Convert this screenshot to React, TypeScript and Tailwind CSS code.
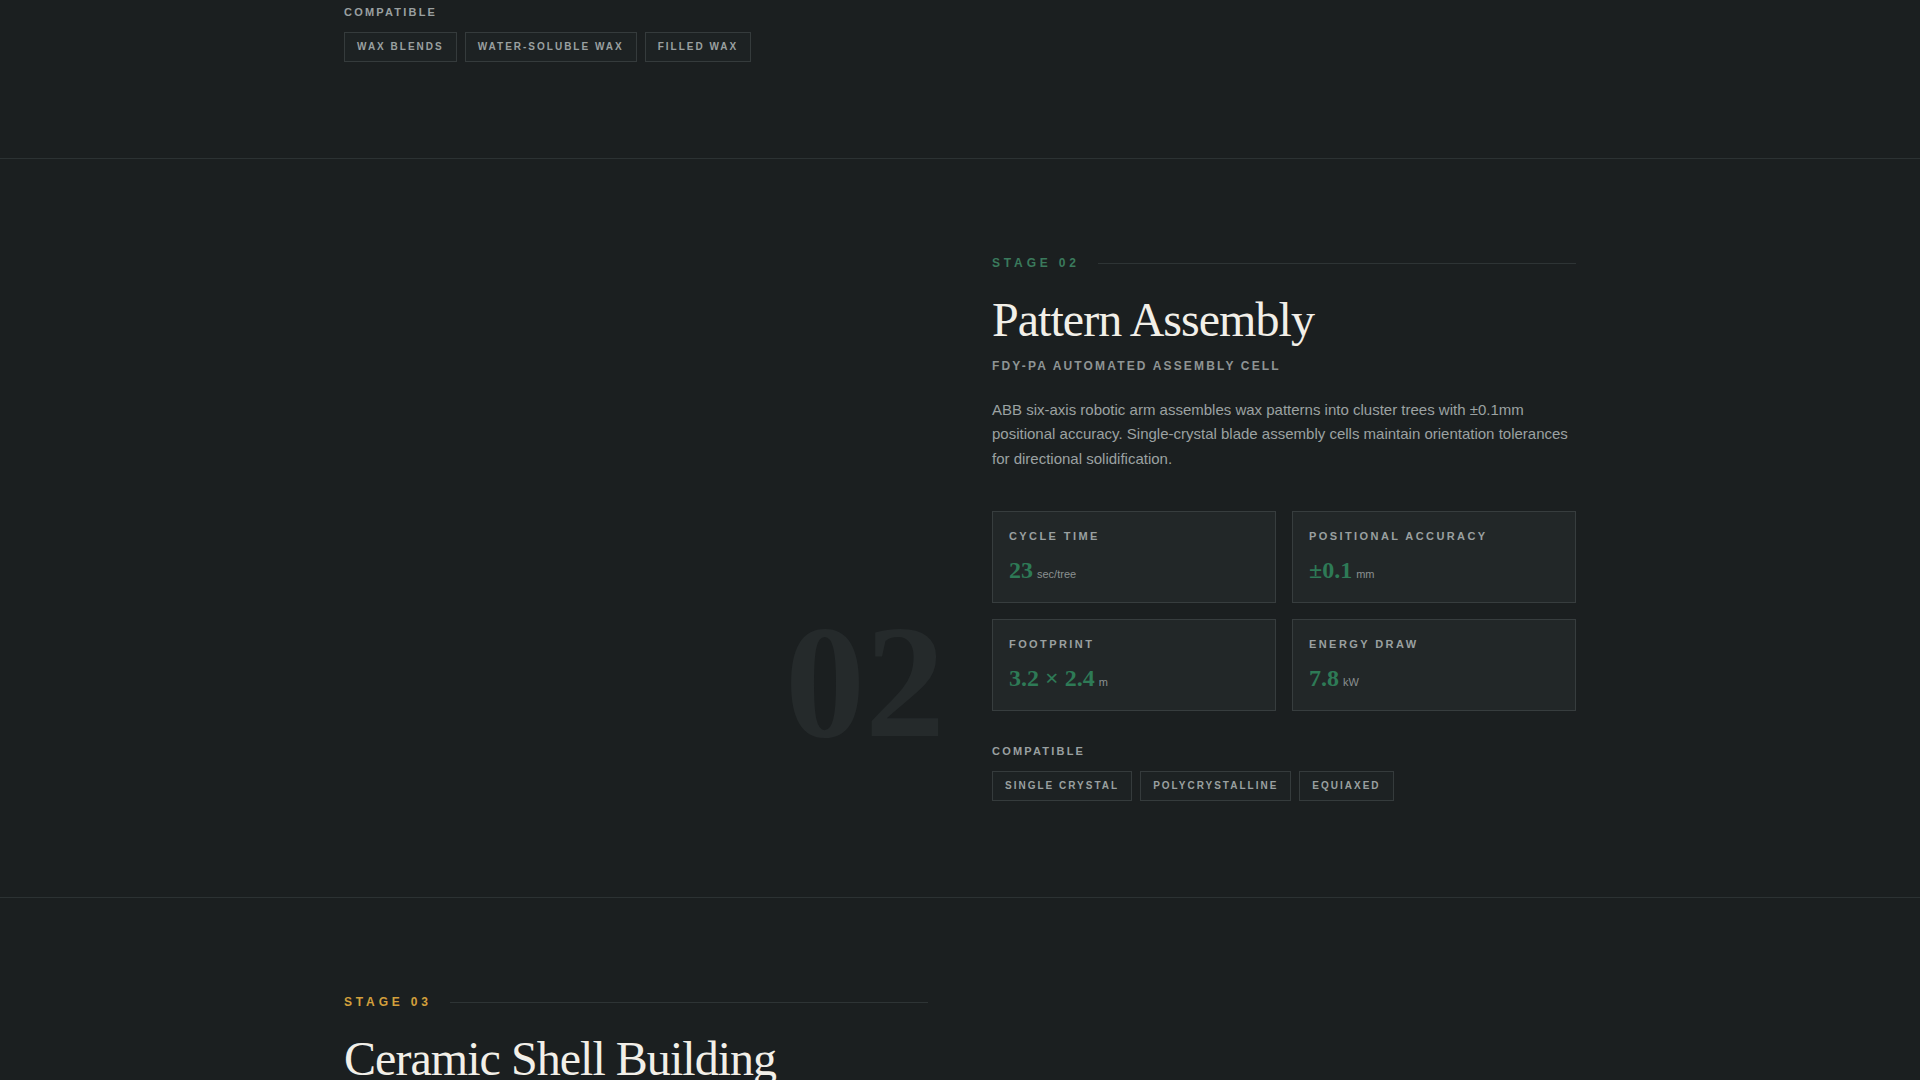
import React from 'react';

const sans = { fontFamily: '"Liberation Sans", Arial, sans-serif' };
const serif = { fontFamily: '"Liberation Serif", "Times New Roman", serif' };

interface Spec {
  label: string;
  value: string;
  unit: string;
}

const Tag: React.FC<{ children: React.ReactNode }> = ({ children }) => (
  <span className="border border-[#353b3c] bg-[#1d2223] px-3 py-[6px] text-[10px] font-bold uppercase leading-4 tracking-[0.2em] text-[#9aa0a0]">
    {children}
  </span>
);

const Compatible: React.FC<{ items: string[] }> = ({ items }) => (
  <div>
    <div className="mb-3 text-[11px] font-bold uppercase leading-4 tracking-[0.2em] text-[#9aa0a0]">Compatible</div>
    <div className="flex flex-wrap gap-2">
      {items.map((i) => (
        <Tag key={i}>{i}</Tag>
      ))}
    </div>
  </div>
);

const StageLabel: React.FC<{ n: string; color: string }> = ({ n, color }) => (
  <div className="flex items-center gap-[18px]">
    <span className={`text-[12px] font-bold uppercase leading-4 tracking-[0.32em] ${color}`}>Stage {n}</span>
    <div className="h-px flex-1 bg-[#2e3435]" />
  </div>
);

const SpecCard: React.FC<{ spec: Spec }> = ({ spec }) => (
  <div className="border border-[#373d3e] bg-[#222728] p-4">
    <div className="text-[11px] font-bold uppercase leading-4 tracking-[0.22em] text-[#9aa0a0]">{spec.label}</div>
    <div className="mt-[10px] flex items-baseline">
      <span className="text-[24px] font-bold leading-8 text-[#2e7a56]" style={serif}>
        {spec.value}
      </span>
      <span className="ml-1 text-[11px] text-[#8a9090]">{spec.unit}</span>
    </div>
  </div>
);

const specs: Spec[] = [
  { label: 'Cycle Time', value: '23', unit: 'sec/tree' },
  { label: 'Positional Accuracy', value: '±0.1', unit: 'mm' },
  { label: 'Footprint', value: '3.2 × 2.4', unit: 'm' },
  { label: 'Energy Draw', value: '7.8', unit: 'kW' },
];

export default function App() {
  return (
    <div className="min-h-screen w-full bg-[#1b1f20]" style={sans}>
      {/* tail of stage 01 */}
      <section className="pb-24 pt-1">
        <div className="mx-auto grid max-w-7xl grid-cols-2 gap-16 px-6">
          <Compatible items={['Wax Blends', 'Water-Soluble Wax', 'Filled Wax']} />
          <div />
        </div>
      </section>

      <section className="border-t border-[#2c3233] py-24">
        <div className="mx-auto grid max-w-7xl grid-cols-2 gap-16 px-6">
          <div className="relative">
            <span
              className="absolute -right-[17px] bottom-[39px] select-none text-[160px] font-bold leading-none text-[#252a2b]"
              style={serif}
            >
              02
            </span>
          </div>
          <div>
            <StageLabel n="02" color="text-[#3a7a5c]" />
            <h2 className="mt-[19px] text-[48px] font-normal leading-[60px] tracking-[-0.02em] text-[#f2efe8]" style={serif}>
              Pattern Assembly
            </h2>
            <div className="mt-2 text-[12px] font-bold uppercase leading-4 tracking-[0.18em] text-[#8e9494]">
              FDY-PA Automated Assembly Cell
            </div>
            <p className="mt-6 text-[15px] leading-relaxed text-[#9ca2a2]">
              ABB six-axis robotic arm assembles wax patterns into cluster trees with ±0.1mm positional accuracy.
              Single-crystal blade assembly cells maintain orientation tolerances for directional solidification.
            </p>
            <div className="mt-10 grid grid-cols-2 gap-4">
              {specs.map((s) => (
                <SpecCard key={s.label} spec={s} />
              ))}
            </div>
            <div className="mt-8">
              <Compatible items={['Single Crystal', 'Polycrystalline', 'Equiaxed']} />
            </div>
          </div>
        </div>
      </section>

      <section className="border-t border-[#2c3233] py-24">
        <div className="mx-auto grid max-w-7xl grid-cols-2 gap-16 px-6">
          <div>
            <StageLabel n="03" color="text-[#d4a03c]" />
            <h2 className="mt-[19px] text-[48px] font-normal leading-[60px] tracking-[-0.02em] text-[#f2efe8]" style={serif}>
              Ceramic Shell Building
            </h2>
          </div>
          <div />
        </div>
      </section>
    </div>
  );
}
